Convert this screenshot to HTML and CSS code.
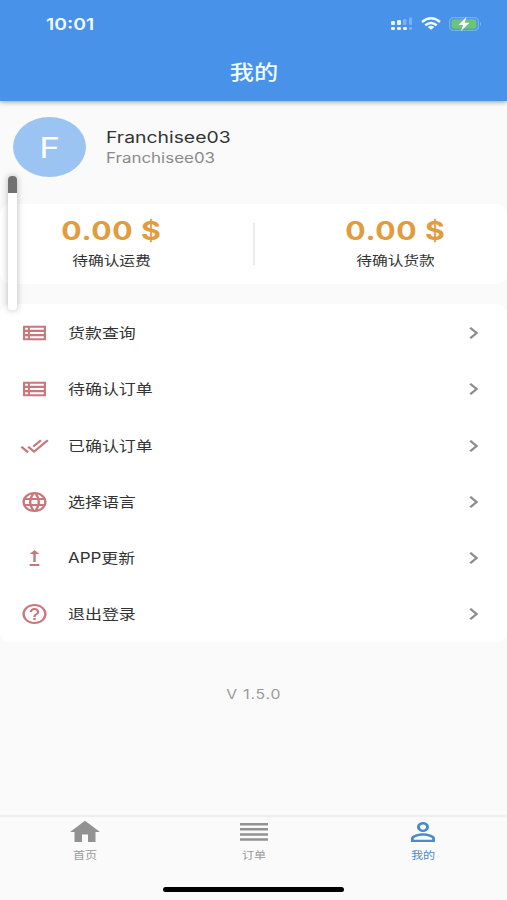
FILE: index.html
```html
<!DOCTYPE html>
<html lang="zh-CN">
<head>
    <meta charset="UTF-8">
    <meta name="viewport" content="width=device-width, initial-scale=1.0">
    <title>我的</title>
    <link rel="stylesheet" href="styles.css">
</head>
<body>

    <div class="app">
        <header class="header">
            <!-- Status bar -->
            <div class="status-bar">
                <span class="wide time">10:01</span>
                <div class="status-icons">
                    <svg class="signal" viewBox="0 0 22 14">
                        <g fill="#e8f6ff">
                            <rect x="0" y="4" width="4" height="4" rx="1.2"/>
                            <rect x="6" y="3" width="4" height="5" rx="1.2"/>
                            <rect x="0" y="10" width="4" height="3" rx="1.2"/>
                            <rect x="6" y="10" width="4" height="3" rx="1.2"/>
                            <rect x="12" y="10" width="4" height="3" rx="1.2"/>
                        </g>
                        <g fill="#78b2f2">
                            <rect x="12" y="2" width="3.5" height="6" rx="1"/>
                            <rect x="18" y="0.5" width="3" height="7.5" rx="1"/>
                            <rect x="18" y="10" width="3" height="3" rx="1"/>
                        </g>
                    </svg>
                    <svg class="wifi" viewBox="0 0 20 13" fill="none" stroke="#f2fbff" stroke-width="2.4">
                        <path d="M1 5 Q10 -2.4 19 5"/>
                        <path d="M4.3 8.3 Q10 3.6 15.7 8.3"/>
                        <path d="M10 12.8 L6.7 9.9 Q10 7.6 13.3 9.9 Z" fill="#f2fbff" stroke="none"/>
                    </svg>
                    <svg class="battery" viewBox="0 0 33 14">
                        <rect x="0.6" y="0.6" width="28.8" height="12.8" rx="4" fill="none" stroke="#73b4e4" stroke-width="1.2"/>
                        <rect x="2.5" y="2.3" width="25" height="9.4" rx="2.4" fill="#6cc576"/>
                        <path d="M31 4.8 Q33 7 31 9.2 Z" fill="#7fc0df"/>
                        <path d="M17.5 0 L9.5 8 H14 L12 14 L20.5 5.8 H15.7 Z" fill="#fff"/>
                    </svg>
                </div>
            </div>
            <h1 class="title"><span class="wide center">我的</span></h1>
        </header>

        <!-- User -->
        <section class="profile">
            <div class="avatar"><span class="wide center">F</span></div>
            <div class="profile-info">
                <div class="name"><span class="wide">Franchisee03</span></div>
                <div class="account"><span class="wide">Franchisee03</span></div>
            </div>
        </section>

        <!-- Amounts -->
        <section class="stats">
            <div class="stat">
                <div class="amount"><span class="wide center">0.00 $</span></div>
                <div class="stat-label"><span class="wide center">待确认运费</span></div>
            </div>
            <div class="divider"></div>
            <div class="stat">
                <div class="amount"><span class="wide center">0.00 $</span></div>
                <div class="stat-label"><span class="wide center">待确认货款</span></div>
            </div>
        </section>

        <!-- Menu -->
        <ul class="menu">
            <li>
                <svg class="icon" viewBox="0 0 24 24" preserveAspectRatio="none"><path fill-rule="evenodd" d="M2.5 4.7h19v14.6h-19zM4.3 6.7v2h2.2v-2zM8.2 6.7v2h11.5v-2zM4.3 11v2h2.2v-2zM8.2 11v2h11.5v-2zM4.3 15.3v2h2.2v-2zM8.2 15.3v2h11.5v-2z"/></svg>
                <span class="wide">货款查询</span>
                <svg class="arrow" viewBox="0 0 24 24" preserveAspectRatio="none"><path d="M10 6L8.59 7.41 13.17 12l-4.58 4.59L10 18l6-6z"/></svg>
            </li>
            <li>
                <svg class="icon" viewBox="0 0 24 24" preserveAspectRatio="none"><path fill-rule="evenodd" d="M2.5 4.7h19v14.6h-19zM4.3 6.7v2h2.2v-2zM8.2 6.7v2h11.5v-2zM4.3 11v2h2.2v-2zM8.2 11v2h11.5v-2zM4.3 15.3v2h2.2v-2zM8.2 15.3v2h11.5v-2z"/></svg>
                <span class="wide">待确认订单</span>
                <svg class="arrow" viewBox="0 0 24 24" preserveAspectRatio="none"><path d="M10 6L8.59 7.41 13.17 12l-4.58 4.59L10 18l6-6z"/></svg>
            </li>
            <li>
                <svg class="icon" viewBox="0 0 24 24" preserveAspectRatio="none"><path d="M18 7l-1.41-1.41-6.34 6.34 1.41 1.41L18 7zm4.24-1.41L11.66 16.17 7.48 12l-1.41 1.41L11.66 19l12-12-1.42-1.41zM.41 13.41L6 19l1.41-1.41L1.83 12 .41 13.41z"/></svg>
                <span class="wide">已确认订单</span>
                <svg class="arrow" viewBox="0 0 24 24" preserveAspectRatio="none"><path d="M10 6L8.59 7.41 13.17 12l-4.58 4.59L10 18l6-6z"/></svg>
            </li>
            <li>
                <svg class="icon" viewBox="0 0 24 24" preserveAspectRatio="none"><path d="M11.99 2C6.47 2 2 6.48 2 12s4.47 10 9.99 10C17.52 22 22 17.52 22 12S17.52 2 11.99 2zm6.93 6h-2.95c-.32-1.25-.78-2.45-1.38-3.56 1.84.63 3.37 1.91 4.33 3.56zM12 4.04c.83 1.2 1.48 2.53 1.91 3.96h-3.82c.43-1.43 1.08-2.76 1.91-3.96zM4.26 14C4.1 13.36 4 12.69 4 12s.1-1.36.26-2h3.38c-.08.66-.14 1.32-.14 2s.06 1.34.14 2H4.26zm.82 2h2.95c.32 1.25.78 2.45 1.38 3.56-1.84-.63-3.37-1.9-4.33-3.56zm2.95-8H5.08c.96-1.66 2.49-2.93 4.33-3.56C8.81 5.55 8.35 6.75 8.03 8zM12 19.96c-.83-1.2-1.48-2.53-1.91-3.96h3.82c-.43 1.43-1.08 2.76-1.91 3.96zM14.34 14H9.66c-.09-.66-.16-1.32-.16-2s.07-1.35.16-2h4.68c.09.65.16 1.32.16 2s-.07 1.34-.16 2zm.25 5.56c.6-1.11 1.06-2.31 1.38-3.56h2.95c-.96 1.65-2.49 2.93-4.33 3.56zM16.36 14c.08-.66.14-1.32.14-2s-.06-1.34-.14-2h3.38c.16.64.26 1.31.26 2s-.1 1.36-.26 2h-3.38z"/></svg>
                <span class="wide">选择语言</span>
                <svg class="arrow" viewBox="0 0 24 24" preserveAspectRatio="none"><path d="M10 6L8.59 7.41 13.17 12l-4.58 4.59L10 18l6-6z"/></svg>
            </li>
            <li>
                <svg class="icon" viewBox="0 0 24 24" preserveAspectRatio="none"><path d="M16 18v2H8v-2h8zM11 7.99V16h2V7.99h3L12 4 8 7.99h3z"/></svg>
                <span class="wide">APP更新</span>
                <svg class="arrow" viewBox="0 0 24 24" preserveAspectRatio="none"><path d="M10 6L8.59 7.41 13.17 12l-4.58 4.59L10 18l6-6z"/></svg>
            </li>
            <li>
                <svg class="icon" viewBox="0 0 24 24" preserveAspectRatio="none"><path d="M11 18h2v-2h-2v2zm1-16C6.48 2 2 6.48 2 12s4.48 10 10 10 10-4.48 10-10S17.52 2 12 2zm0 18c-4.41 0-8-3.59-8-8s3.59-8 8-8 8 3.59 8 8-3.59 8-8 8zm0-14c-2.21 0-4 1.79-4 4h2c0-1.1.9-2 2-2s2 .9 2 2c0 2-3 1.75-3 5h2c0-2.25 3-2.5 3-5 0-2.21-1.79-4-4-4z"/></svg>
                <span class="wide">退出登录</span>
                <svg class="arrow" viewBox="0 0 24 24" preserveAspectRatio="none"><path d="M10 6L8.59 7.41 13.17 12l-4.58 4.59L10 18l6-6z"/></svg>
            </li>
        </ul>

        <div class="version"><span class="wide center">V 1.5.0</span></div>

        <!-- Bottom navigation -->
        <nav class="tabs">
            <a class="tab">
                <svg class="tab-icon" viewBox="0 0 24 24" preserveAspectRatio="none"><path d="M10 20v-6h4v6h5v-8h3L12 3 2 12h3v8z"/></svg>
                <span class="wide center">首页</span>
            </a>
            <a class="tab">
                <svg class="tab-icon" viewBox="0 0 36 30"><path d="M4 6h28v2.5H4zM4 11.1h28v2.5H4zM4 16.2h28v2.5H4zM4 21.3h28v2.5H4z"/></svg>
                <span class="wide center">订单</span>
            </a>
            <a class="tab active">
                <svg class="tab-icon" viewBox="0 0 24 24" preserveAspectRatio="none"><path d="M12 5.9c1.16 0 2.1.94 2.1 2.1s-.94 2.1-2.1 2.1S9.9 9.16 9.9 8s.94-2.1 2.1-2.1m0 9c2.97 0 6.1 1.46 6.1 2.1v1.1H5.9V17c0-.64 3.13-2.1 6.1-2.1M12 4C9.79 4 8 5.79 8 8s1.79 4 4 4 4-1.79 4-4-1.79-4-4-4zm0 9c-2.67 0-8 1.34-8 4v3h16v-3c0-2.66-5.33-4-8-4z"/></svg>
                <span class="wide center">我的</span>
            </a>
        </nav>
        <div class="home-indicator"></div>

        <!-- Floating pencil on the left edge -->
        <div class="pencil"></div>
    </div>

</body>
</html>
```
FILE: styles.css
```css
* {
    box-sizing: border-box;
}
body {
    margin: 0;
    font-family: Inter, 'Noto Sans CJK SC', sans-serif;
    background-color: #fafafa;
    color: #333;
}
.app {
    position: relative;
    display: flex;
    flex-direction: column;
    height: 900px;
    overflow: hidden;
}
/* wide lettering */
.wide {
    display: inline-block;
    white-space: nowrap;
    transform: scaleX(1.21);
    transform-origin: left center;
}
.wide.center {
    transform-origin: center;
}
.header {
    height: 101px;
    background-color: #4992ea;
    color: #f0fbff;
    box-shadow: 0 1px 5px rgba(0, 0, 0, 0.4);
}
.status-bar {
    display: flex;
    justify-content: space-between;
    align-items: center;
    height: 47px;
    padding: 0 25px 0 46px;
}
.time {
    font-size: 16px;
    font-weight: 600;
}
.status-icons {
    display: flex;
    align-items: center;
}
.signal {
    width: 22px;
    height: 14px;
    margin-right: 8px;
}
.wifi {
    width: 20px;
    height: 13px;
    margin-right: 8px;
}
.battery {
    width: 33px;
    height: 14px;
}
.title {
    margin: 0;
    text-align: center;
    font-size: 20px;
    font-weight: 500;
    line-height: 53px;
}
.profile {
    display: flex;
    align-items: center;
    height: 103px;
    padding: 0 13px 11px;
}
.avatar {
    width: 73px;
    height: 60px;
    border-radius: 50%;
    background-color: #9bc4f2;
    color: #fff;
    font-size: 29px;
    line-height: 61px;
    text-align: center;
}
.profile-info {
    margin-left: 20px;
}
.name {
    font-size: 16px;
    line-height: 22px;
}
.account {
    font-size: 14px;
    line-height: 20px;
    color: #8a8a8a;
}
.stats {
    display: flex;
    align-items: center;
    height: 80px;
    background-color: #fff;
    border-radius: 10px;
}
.stat {
    flex: 1;
    text-align: center;
}
.amount {
    font-size: 25px;
    font-weight: 700;
    line-height: 32px;
    letter-spacing: 0.5px;
    color: #e29c40;
}
.stat-label {
    font-size: 13px;
    line-height: 26px;
}
.divider {
    width: 2px;
    height: 42px;
    margin: 0 30px;
    background-color: #ebebeb;
}
.menu {
    height: 338px;
    margin: 20px 0 0;
    padding: 1px 0 0;
    list-style: none;
    background-color: #fff;
    border-radius: 10px;
}
.menu li {
    display: flex;
    align-items: center;
    height: 56.25px;
    padding: 0 19px 0 20px;
    font-size: 14px;
    line-height: 18px;
}
.icon {
    width: 29px;
    height: 24px;
    margin-right: 19px;
    fill: #c9777a;
}
.arrow {
    width: 29px;
    height: 24px;
    margin-left: auto;
    fill: #8c8c8c;
}
.version {
    margin-top: 42px;
    text-align: center;
    font-size: 13px;
    line-height: 20px;
    letter-spacing: 0.7px;
    color: #9a9a9a;
}
.tabs {
    display: flex;
    height: 70px;
    margin-top: auto;
    border-top: 2px solid #eee;
}
.tab {
    flex: 1;
    display: flex;
    flex-direction: column;
    align-items: center;
    font-size: 10px;
    line-height: 16px;
    color: #999;
}
.tab-icon {
    width: 36px;
    height: 30px;
    fill: #929292;
}
.tab.active {
    color: #4a8ccb;
}
.tab.active .tab-icon {
    fill: #4a8ccb;
}
.home-indicator {
    width: 181px;
    height: 5px;
    margin: 2px auto 8px;
    border-radius: 3px;
    background-color: #000;
}
.pencil {
    position: absolute;
    left: 8px;
    top: 176px;
    width: 9px;
    height: 134px;
    border-radius: 4px;
    background: linear-gradient(#717171 17px, #fff 17px);
    box-shadow: 0 0 7px rgba(0, 0, 0, 0.28);
}
```
